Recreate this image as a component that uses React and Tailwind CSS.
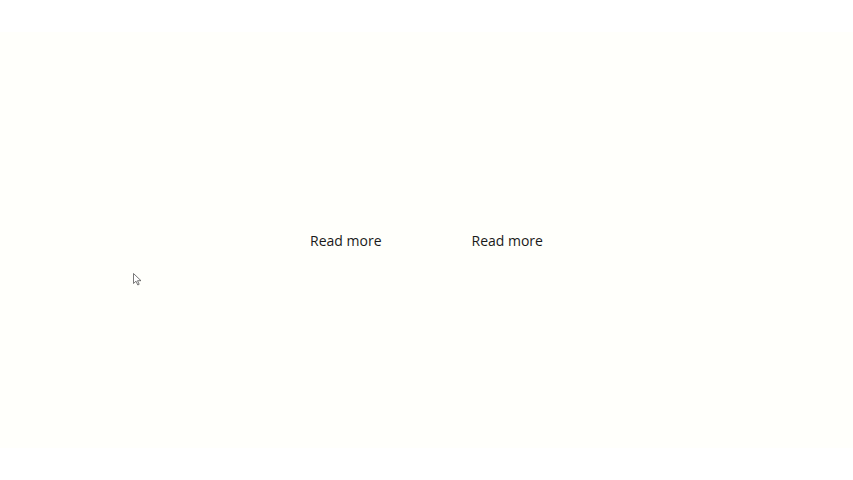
import React from 'react'

export default function App() {
  return (
    <div className="relative w-full h-[480px] bg-white py-8" style={{ fontFamily: '"Open Sans", "Liberation Sans", sans-serif' }}>
      <div className="h-full bg-[#fffffb] flex items-center justify-center gap-[90px] pt-[2px]">
        <a className="text-[14px] leading-5 text-[#1a1a1a] cursor-pointer">Read more</a>
        <a className="text-[14px] leading-5 text-[#1a1a1a] cursor-pointer">Read more</a>
      </div>
      <svg className="absolute left-[133px] top-[273px]" width="9" height="13" viewBox="0 0 9 13">
        <path d="M0.5 0.5 L0.5 10.5 L3 8.2 L4.8 12 L6.2 11.3 L4.5 7.7 L8 7.7 Z" fill="#fff" stroke="#555" strokeWidth="0.8" />
      </svg>
    </div>
  )
}
